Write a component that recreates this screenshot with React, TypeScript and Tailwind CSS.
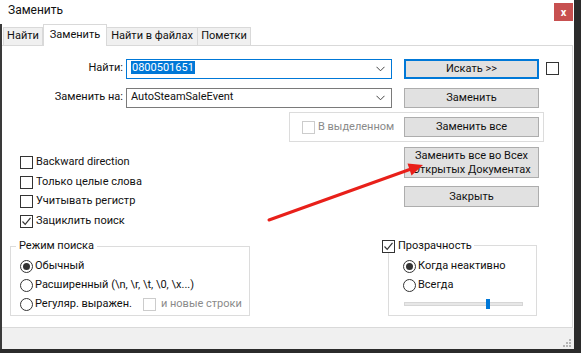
import React from "react";

const font = { fontFamily: 'Roboto, "Noto Sans", sans-serif' };

function Check({ checked, disabled }: { checked?: boolean; disabled?: boolean }) {
  return (
    <span
      className={`flex h-[13px] w-[13px] shrink-0 items-center justify-center border bg-white ${
        disabled ? "border-[#cccccc]" : "border-[#333333]"
      }`}
    >
      {checked && (
        <svg width="11" height="11" viewBox="0 0 11 11">
          <path d="M1.5 5.5 L4.2 8.3 L9.5 1.8" fill="none" stroke="#333" strokeWidth="1.2" />
        </svg>
      )}
    </span>
  );
}

function Radio({ checked }: { checked?: boolean }) {
  return (
    <span className="flex h-[13px] w-[13px] shrink-0 items-center justify-center rounded-full border border-[#333333] bg-white">
      {checked && <span className="h-[7px] w-[7px] rounded-full bg-[#333333]" />}
    </span>
  );
}

function Btn({ children, className = "", active }: { children: React.ReactNode; className?: string; active?: boolean }) {
  return (
    <div
      className={`flex w-[135px] shrink-0 items-center justify-center whitespace-nowrap bg-[#e1e1e1] text-center leading-[14px] text-[#111] ${
        active ? "border-2 border-[#0078d7]" : "border border-[#adadad]"
      } ${className}`}
    >
      {children}
    </div>
  );
}

function Chevron() {
  return (
    <svg width="9" height="6" viewBox="0 0 9 6">
      <path d="M0.5 0.8 L4.5 4.8 L8.5 0.8" fill="none" stroke="#444" strokeWidth="1" />
    </svg>
  );
}

function Tab({ children, active, w }: { children: React.ReactNode; active?: boolean; w: string }) {
  return active ? (
    <div className={`relative z-10 -mb-px flex h-[22px] items-center justify-center border border-b-0 border-[#d9d9d9] bg-white ${w}`}>
      {children}
    </div>
  ) : (
    <div className={`flex h-[18px] items-center justify-center border border-b-0 border-[#d9d9d9] bg-[#f0f0f0] ${w}`}>
      {children}
    </div>
  );
}

export default function App() {
  return (
    <div
      className="relative h-[353px] w-[581px] overflow-hidden whitespace-nowrap bg-[#2b2b2b] text-[11px] text-[#111]"
      style={font}
    >
      <div className="flex h-[349px] w-[574px] flex-col bg-white">
        {/* title bar */}
        <div className="flex h-[24px] items-start justify-between pl-[8px] pr-[1px] pt-[3px]">
          <span className="text-[12px] leading-[15px]">Заменить</span>
          <div className="flex h-[18px] w-[19px] items-center justify-center bg-[#c75050] text-[11px] font-bold leading-none text-white">
            x
          </div>
        </div>

        <div className="flex flex-1 border-l-2 border-[#3a3a3a]">
          <div className="flex flex-1 flex-col">
            {/* tabs */}
            <div className="flex h-[21px] items-end pl-[1px]">
              <Tab w="w-[40px]">Найти</Tab>
              <Tab active w="w-[64px]">Заменить</Tab>
              <Tab w="w-[91px] border-l-0">Найти в файлах</Tab>
              <Tab w="w-[53px] border-l-0">Пометки</Tab>
            </div>

            {/* pane */}
            <div className="mr-[1px] flex h-[283px] flex-col border border-l-0 border-[#d9d9d9] bg-white pt-[12px]">
              <div className="flex h-[21px] items-center">
                <div className="w-[124px] pr-[3px] text-right">Найти:</div>
                <div className="flex h-[20px] w-[266px] items-center border border-[#0078d7] bg-white pl-[4px] pr-[6px]">
                  <div className="flex-1">
                    <span className="bg-[#0078d7] px-px text-white">0800501651</span>
                  </div>
                  <Chevron />
                </div>
                <Btn active className="ml-[12px] h-[20px]">
                  Искать &gt;&gt;
                </Btn>
                <span className="ml-[7px]">
                  <Check />
                </span>
              </div>

              <div className="mt-[8px] flex h-[21px] items-center">
                <div className="w-[124px] pr-[3px] text-right">Заменить на:</div>
                <div className="flex h-[20px] w-[266px] items-center border border-[#7a7a7a] bg-white pl-[4px] pr-[6px]">
                  <div className="flex-1">AutoSteamSaleEvent</div>
                  <Chevron />
                </div>
                <Btn className="ml-[12px] h-[20px]">Заменить</Btn>
              </div>

              <div className="ml-[287px] mt-[4px] flex h-[30px] w-[255px] items-center border border-[#dcdcdc] pl-[12px] pr-[4px]">
                <Check disabled />
                <span className="ml-[3px] flex-1 text-[#8a8a8a]">В выделенном</span>
                <Btn className="h-[20px]">Заменить все</Btn>
              </div>

              {/* options + action buttons */}
              <div className="flex h-[103px] items-start">
                <div className="ml-[18px] mt-[14px] flex flex-col gap-[6.5px]">
                  {[
                    ["Backward direction", false],
                    ["Только целые слова", false],
                    ["Учитывать регистр", false],
                    ["Зациклить поиск", true],
                  ].map(([t, c]) => (
                    <div key={t as string} className="flex h-[13px] items-center gap-[3px]">
                      <Check checked={c as boolean} />
                      <span>{t as string}</span>
                    </div>
                  ))}
                </div>
                <div className="ml-auto mr-[33px] mt-[5px] flex flex-col gap-[8px]">
                  <Btn className="h-[31px] flex-col">
                    <span>Заменить все во Всех</span>
                    <span>Открытых Документах</span>
                  </Btn>
                  <Btn className="h-[21px]">Закрыть</Btn>
                </div>
              </div>

              {/* group boxes */}
              <div className="flex items-start">
                <div className="relative ml-[8px] mt-px h-[70px] w-[240px] shrink-0 border border-[#dcdcdc] pl-[9px] pt-[13px]">
                  <span className="absolute left-[5px] top-[-8px] bg-white px-[3px] leading-[14px]">Режим поиска</span>
                  <div className="flex flex-col gap-[6px]">
                    <div className="flex h-[13px] items-center gap-[2px]">
                      <Radio checked />
                      <span>Обычный</span>
                    </div>
                    <div className="flex h-[13px] items-center gap-[2px]">
                      <Radio />
                      <span>Расширенный (\n, \r, \t, \0, \x...)</span>
                    </div>
                    <div className="flex h-[13px] items-center gap-[2px]">
                      <Radio />
                      <span>Регуляр. выражен.</span>
                      <span className="ml-[9px]">
                        <Check disabled />
                      </span>
                      <span className="ml-[3px] text-[#8a8a8a]">и новые строки</span>
                    </div>
                  </div>
                </div>

                <div className="relative ml-[138px] h-[71px] w-[149px] shrink-0 border border-[#dcdcdc] pl-[14px] pt-[14px]">
                  <span className="absolute left-[-7px] top-[-7px] flex items-center gap-[3px] bg-white pr-[2px] leading-[14px]">
                    <Check checked />
                    <span>Прозрачность</span>
                  </span>
                  <div className="flex flex-col gap-[6px]">
                    <div className="flex h-[13px] items-center gap-[2px]">
                      <Radio checked />
                      <span>Когда неактивно</span>
                    </div>
                    <div className="flex h-[13px] items-center gap-[2px]">
                      <Radio />
                      <span>Всегда</span>
                    </div>
                    <div className="relative ml-[1px] mt-[1px] h-[10px] w-[119px]">
                      <div className="absolute left-0 right-0 top-[3px] h-[4px] border border-[#d6d6d6] bg-[#e7e7e7]" />
                      <div className="absolute left-[82px] top-0 h-[10px] w-[4px] bg-[#0078d7]" />
                    </div>
                  </div>
                </div>
              </div>
            </div>

            {/* footer */}
            <div className="relative flex-1 bg-[#f0f0f0]">
              <svg className="absolute bottom-[2px] right-[3px]" width="8" height="8" viewBox="0 0 8 8">
                <g fill="#b5b5b5">
                  <rect x="6" y="0" width="2" height="2" />
                  <rect x="3" y="3" width="2" height="2" />
                  <rect x="6" y="3" width="2" height="2" />
                  <rect x="0" y="6" width="2" height="2" />
                  <rect x="3" y="6" width="2" height="2" />
                  <rect x="6" y="6" width="2" height="2" />
                </g>
              </svg>
            </div>
          </div>
        </div>
      </div>

      {/* red annotation arrow */}
      <svg className="pointer-events-none absolute left-0 top-0" width="581" height="353">
        <line x1="269" y1="220" x2="411" y2="169" stroke="#e8201a" strokeWidth="3" strokeLinecap="round" />
        <polygon points="423,165 411.5,175.5 407.5,163.5" fill="#e8201a" />
      </svg>
    </div>
  );
}
